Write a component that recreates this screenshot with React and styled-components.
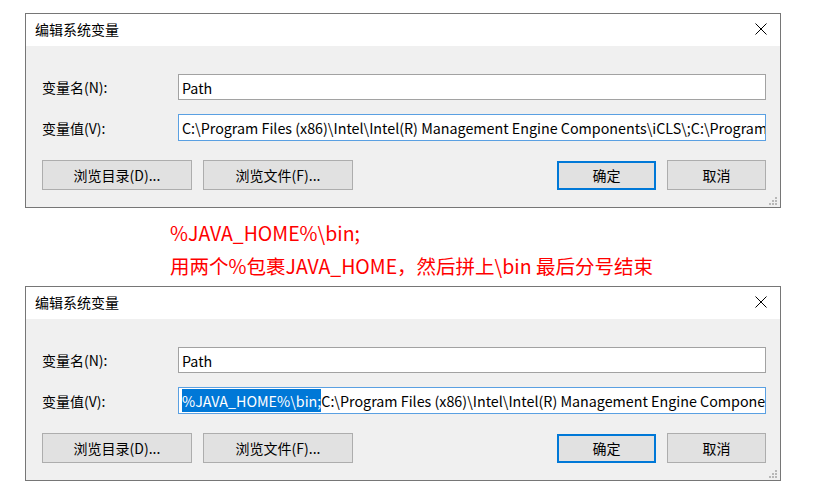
import styled, { createGlobalStyle } from 'styled-components';

const GlobalStyle = createGlobalStyle`
    body {
        margin: 0;
        background: #ffffff;
        font-family: "Noto Sans CJK SC", "Noto Sans", sans-serif;
    }
`;

const Page = styled.div`
    width: 825px;
    height: 495px;
    padding: 13px 0 0 25px;
    box-sizing: border-box;
    display: flex;
    flex-direction: column;
`;

const Window = styled.div`
    position: relative;
    width: 756px;
    border: 1px solid #767676;
    box-sizing: border-box;
    background: #f0f0f0;
    color: #000;
    font-size: 14px;
`;

const TitleBar = styled.div`
    height: 32px;
    background: #ffffff;
    display: flex;
    align-items: center;
    justify-content: space-between;
    padding: 0 13px 2px 9px;
    box-sizing: border-box;
`;

const Title = styled.span`
    font-size: 14px;
    line-height: 1;
`;

const Body = styled.div`
    display: flex;
    flex-direction: column;
    padding: 28px 13px 17px 16px;
`;

const Row = styled.div`
    display: flex;
    align-items: center;
    margin-bottom: ${(p) => p.gap || 0}px;
`;

const Label = styled.label`
    width: 136px;
    flex: none;
`;

const Field = styled.div`
    width: 588px;
    height: ${(p) => (p.focused ? 27 : 26)}px;
    box-sizing: border-box;
    background: #ffffff;
    border: 1px solid ${(p) => (p.focused ? '#5aa0e2' : '#a2a2a2')};
    padding: 0 3px;
    display: flex;
    align-items: center;
    white-space: nowrap;
    overflow: hidden;
    font-size: 14.3px;
`;

const Selected = styled.span`
    background: #0078d7;
    color: #ffffff;
    padding: 1px 0;
`;

const Buttons = styled.div`
    display: flex;
    align-items: center;
    margin-top: 19px;
`;

const Button = styled.button`
    width: ${(p) => p.w}px;
    height: ${(p) => (p.primary ? 29 : 30)}px;
    margin-right: ${(p) => p.mr || 0}px;
    box-sizing: border-box;
    background: #e1e1e1;
    border: ${(p) => (p.primary ? '2px solid #0078d7' : '1px solid #adadad')};
    font-family: inherit;
    font-size: 14px;
    color: #000;
    padding: 0;
`;

const Spacer = styled.div`
    flex: 1;
`;

const Grip = styled.svg`
    position: absolute;
    right: 3px;
    bottom: 2px;
`;

const Note = styled.div`
    padding-left: 145px;
    margin: 8px 0 4px;
    color: #ff0000;
    font-size: 19.5px;
    line-height: 33px;
`;

const CloseIcon = () => (
    <svg width="12" height="12" viewBox="0 0 12 12">
        <path d="M0.5 0.5 L11.5 11.5 M11.5 0.5 L0.5 11.5" stroke="#000" strokeWidth="1" />
    </svg>
);

const GripIcon = () => (
    <Grip width="10" height="10" viewBox="0 0 10 10">
        {[[8, 0], [5, 3], [8, 3], [2, 6], [5, 6], [8, 6]].map(([x, y]) => (
            <rect key={`${x}-${y}`} x={x} y={y + 2} width="2" height="2" fill="#b8b8b8" />
        ))}
    </Grip>
);

const rest = 'C:\\Program Files (x86)\\Intel\\Intel(R) Management Engine Components\\iCLS\\;C:\\Program Files\\Intel\\Intel(R) Management Engine Components\\iCLS\\';

const EditDialog = ({ selected }) => (
    <Window>
        <TitleBar>
            <Title>编辑系统变量</Title>
            <CloseIcon />
        </TitleBar>
        <Body>
            <Row gap={14}>
                <Label>变量名(N):</Label>
                <Field>Path</Field>
            </Row>
            <Row>
                <Label>变量值(V):</Label>
                <Field focused>
                    {selected && <Selected>{selected}</Selected>}
                    {rest}
                </Field>
            </Row>
            <Buttons>
                <Button w={150} mr={11}>浏览目录(D)...</Button>
                <Button w={150}>浏览文件(F)...</Button>
                <Spacer />
                <Button w={99} mr={11} primary>确定</Button>
                <Button w={99} mr={1}>取消</Button>
            </Buttons>
        </Body>
        <GripIcon />
    </Window>
);

export default function App() {
    return (
        <Page>
            <GlobalStyle />
            <EditDialog />
            <Note>
                <div>%JAVA_HOME%\bin;</div>
                <div>用两个%包裹JAVA_HOME，然后拼上\bin 最后分号结束</div>
            </Note>
            <EditDialog selected="%JAVA_HOME%\bin;" />
        </Page>
    );
}
